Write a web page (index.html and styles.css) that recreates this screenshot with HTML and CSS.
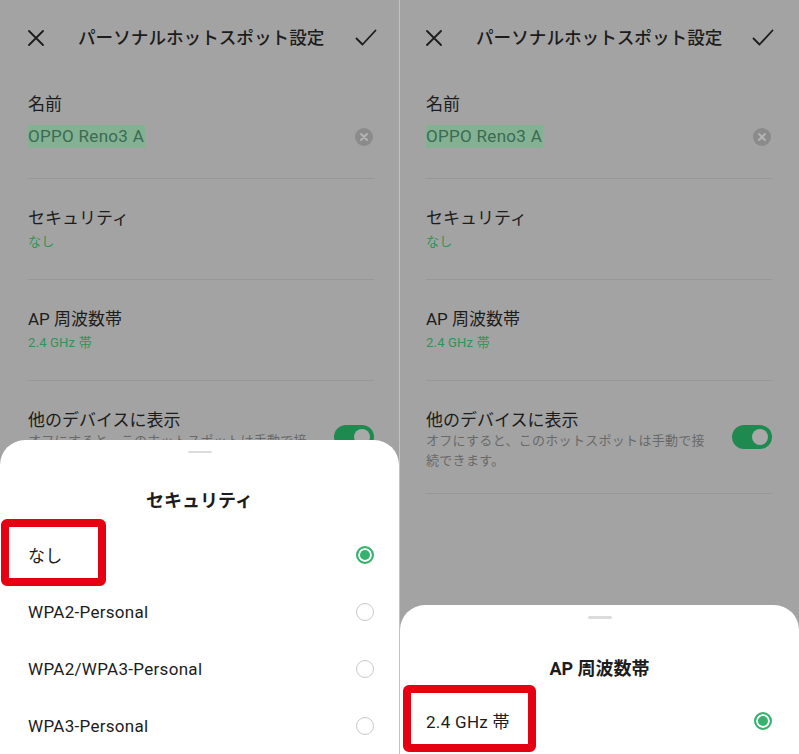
FILE: index.html
```html
<!DOCTYPE html>
<html lang="ja">
<head>
<meta charset="utf-8">
<title>パーソナルホットスポット設定</title>
<link rel="stylesheet" href="styles.css">
</head>
<body>
<div class="screens">
  <section class="phone">
    <header class="topbar">
      <svg class="ico-close" viewBox="0 0 16 16" width="16" height="16"><path d="M1 1 L15 15 M15 1 L1 15" stroke="#1c1c1c" stroke-width="1.8" fill="none" stroke-linecap="round"/></svg>
      <h1 class="title">パーソナルホットスポット設定</h1>
      <svg class="ico-check" viewBox="0 0 22 18" width="22" height="18"><path d="M1.5 9.5 L7.5 15.5 L20.5 1.5" stroke="#1c1c1c" stroke-width="1.8" fill="none" stroke-linecap="round" stroke-linejoin="round"/></svg>
    </header>
    <div class="row row-name">
      <div class="label">名前</div>
      <div class="input-line">
        <span class="selected-text">OPPO Reno3 A</span>
        <svg class="ico-clear" viewBox="0 0 18 18" width="18" height="18"><circle cx="9" cy="9" r="9" fill="#8b8b8b"/><path d="M6 6 L12 12 M12 6 L6 12" stroke="#b3b3b3" stroke-width="2" stroke-linecap="round"/></svg>
      </div>
    </div>
    <div class="row">
      <div class="label">セキュリティ</div>
      <div class="value">なし</div>
    </div>
    <div class="row">
      <div class="label">AP 周波数帯</div>
      <div class="value">2.4 GHz 帯</div>
    </div>
    <div class="row row-toggle">
      <div class="toggle-text">
        <div class="label">他のデバイスに表示</div>
        <div class="desc">オフにすると、このホットスポットは手動で接続できます。</div>
      </div>
      <div class="switch"><span class="knob"></span></div>
    </div>

    <div class="sheet sheet-security">
      <div class="handle"></div>
      <h2 class="sheet-title">セキュリティ</h2>
      <ul class="options">
        <li class="option"><span class="mark mark-left"></span><span>なし</span><span class="radio on"></span></li>
        <li class="option"><span>WPA2-Personal</span><span class="radio"></span></li>
        <li class="option"><span>WPA2/WPA3-Personal</span><span class="radio"></span></li>
        <li class="option"><span>WPA3-Personal</span><span class="radio"></span></li>
      </ul>
    </div>
  </section>

  <section class="phone phone-right">
    <header class="topbar">
      <svg class="ico-close" viewBox="0 0 16 16" width="16" height="16"><path d="M1 1 L15 15 M15 1 L1 15" stroke="#1c1c1c" stroke-width="1.8" fill="none" stroke-linecap="round"/></svg>
      <h1 class="title">パーソナルホットスポット設定</h1>
      <svg class="ico-check" viewBox="0 0 22 18" width="22" height="18"><path d="M1.5 9.5 L7.5 15.5 L20.5 1.5" stroke="#1c1c1c" stroke-width="1.8" fill="none" stroke-linecap="round" stroke-linejoin="round"/></svg>
    </header>
    <div class="row row-name">
      <div class="label">名前</div>
      <div class="input-line">
        <span class="selected-text">OPPO Reno3 A</span>
        <svg class="ico-clear" viewBox="0 0 18 18" width="18" height="18"><circle cx="9" cy="9" r="9" fill="#8b8b8b"/><path d="M6 6 L12 12 M12 6 L6 12" stroke="#b3b3b3" stroke-width="2" stroke-linecap="round"/></svg>
      </div>
    </div>
    <div class="row">
      <div class="label">セキュリティ</div>
      <div class="value">なし</div>
    </div>
    <div class="row">
      <div class="label">AP 周波数帯</div>
      <div class="value">2.4 GHz 帯</div>
    </div>
    <div class="row row-toggle">
      <div class="toggle-text">
        <div class="label">他のデバイスに表示</div>
        <div class="desc">オフにすると、このホットスポットは手動で接続できます。</div>
      </div>
      <div class="switch"><span class="knob"></span></div>
    </div>

    <div class="sheet sheet-band">
      <div class="handle"></div>
      <h2 class="sheet-title">AP 周波数帯</h2>
      <ul class="options">
        <li class="option"><span class="mark mark-right"></span><span>2.4 GHz 帯</span><span class="radio on"></span></li>
      </ul>
    </div>
  </section>
</div>
</body>
</html>
```

FILE: styles.css
```css
* { box-sizing: border-box; }

html, body {
  margin: 0;
  padding: 0;
  background: #a3a3a3;
}

body {
  font-family: Roboto, "Noto Sans CJK JP", sans-serif;
  color: #1c1c1c;
}

.screens {
  display: flex;
  width: 799px;
  height: 754px;
}

.phone {
  position: relative;
  width: 399px;
  height: 754px;
  overflow: hidden;
  background: #a3a3a3;
}

.phone-right {
  width: 400px;
  border-left: 1px solid #c2c2c2;
}

/* top bar */
.topbar {
  height: 76px;
  display: flex;
  align-items: center;
  padding: 0 22px 0 28px;
}

.phone-right .topbar {
  padding: 0 25px 0 26px;
}

.ico-close { flex: none; }

.title {
  flex: 1;
  margin: 0 0 0 34px;
  font-size: 17.6px;
  font-weight: 500;
  line-height: 24px;
  white-space: nowrap;
}

.ico-check { flex: none; }

/* settings rows */
.row {
  margin: 0 25px 0 28px;
  padding: 26px 0 26px;
  border-bottom: 1px solid #979797;
}

.phone-right .row {
  margin: 0 27px 0 26px;
}

.row-name {
  padding: 15px 0 30px;
}

.label {
  font-size: 17px;
  line-height: 26px;
}

.value {
  font-size: 13px;
  line-height: 22px;
  color: #2e9458;
  letter-spacing: 0.2px;
}

.input-line {
  margin-top: 8px;
  display: flex;
  align-items: center;
  justify-content: space-between;
}

.selected-text {
  display: inline-block;
  font-size: 17px;
  line-height: 23px;
  height: 23px;
  letter-spacing: 0.3px;
  background: #83b192;
  color: #3c6a52;
  padding-right: 1px;
}

.ico-clear { margin-right: 1px; }

.row-toggle {
  display: flex;
  align-items: center;
  gap: 20px;
  padding: 26px 0 22px;
}

.toggle-text { flex: 1; }

.desc {
  margin-top: -2px;
  font-size: 13px;
  line-height: 20px;
  letter-spacing: 0.3px;
  color: #696969;
}

.switch {
  flex: none;
  width: 40px;
  height: 24px;
  border-radius: 12px;
  background: #1e8a4f;
  display: flex;
  align-items: center;
  justify-content: flex-end;
  padding-right: 4px;
  margin-top: -4px;
}

.knob {
  width: 16px;
  height: 16px;
  border-radius: 50%;
  background: #a9a9a9;
}

/* bottom sheets */
.sheet {
  position: absolute;
  left: 0;
  right: 0;
  bottom: 0;
  background: #ffffff;
  border-radius: 25px 25px 0 0;
  padding-top: 11px;
  display: flex;
  flex-direction: column;
}

.sheet-security { top: 440px; }
.sheet-band { top: 605px; }

.handle {
  align-self: center;
  width: 24px;
  height: 3px;
  border-radius: 2px;
  background: #dcdcdc;
}

.sheet-title {
  margin: 36px 0 0;
  text-align: center;
  font-size: 18px;
  line-height: 24px;
  font-weight: 700;
  color: #1c1c1c;
}

.sheet-band .sheet-title {
  margin-top: 38px;
}

.options {
  list-style: none;
  margin: 13px 0 0;
  padding: 0;
}

.sheet-band .options {
  margin-top: 11px;
}

.option {
  position: relative;
  height: 57px;
  display: flex;
  align-items: center;
  justify-content: space-between;
  padding: 0 25px 0 28px;
  font-size: 17px;
  letter-spacing: 0.3px;
  color: #1c1c1c;
}

.sheet-band .option {
  padding: 0 27px 0 26px;
}

.radio {
  width: 18px;
  height: 18px;
  border-radius: 50%;
  border: 1.5px solid #c9c9c9;
  background: #fff;
}

.radio.on {
  border: 2px solid #35b36d;
  box-shadow: inset 0 0 0 2px #fff;
  background: #35b36d;
}

/* red annotation boxes */
.mark {
  position: absolute;
  top: -7px;
  height: 67px;
  border: 8px solid #e50012;
  border-radius: 6px;
}

.mark-left { left: 1px; width: 105px; }
.mark-right { left: 3px; width: 133px; }
```
